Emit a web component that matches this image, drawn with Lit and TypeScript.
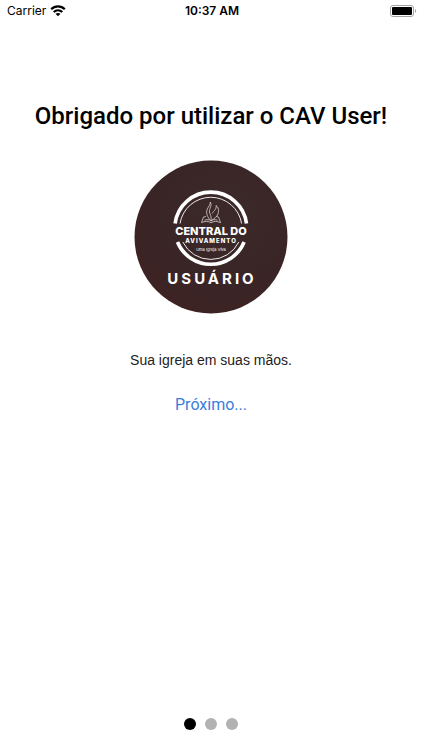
import { LitElement, html, css } from "lit";
import { customElement, state } from "lit/decorators.js";

@customElement("status-bar")
class StatusBar extends LitElement {
  static styles = css`
    :host {
      display: grid;
      grid-template-columns: 1fr auto 1fr;
      align-items: center;
      height: 22px;
      padding: 0 5px 0 7px;
      font-size: 12px;
      line-height: 22px;
    }
    .carrier {
      display: flex;
      align-items: center;
      gap: 4px;
    }
    .time {
      font-weight: 600;
    }
    .battery {
      justify-self: end;
    }
    svg {
      display: block;
    }
  `;

  render() {
    return html`
      <div class="carrier">
        <span>Carrier</span>
        <svg width="16" height="12" viewBox="0 0 16 12" aria-label="Wi-Fi">
          <g fill="none" stroke="#000" stroke-width="2.2">
            <path d="M1.2 4.3C5 .5 11 .5 14.8 4.3" />
            <path d="M3.7 7C6.2 4.7 9.8 4.7 12.3 7" />
          </g>
          <path d="M5.5 8.7C6.9 7.6 9.1 7.6 10.5 8.7L8 11.2z" />
        </svg>
      </div>
      <div class="time">10:37 AM</div>
      <svg class="battery" width="27" height="12" viewBox="0 0 27 12" aria-label="Battery">
        <rect x=".5" y=".5" width="23" height="11" rx="2.5" fill="#fff" stroke="#a3a3a3" />
        <rect x="2" y="2" width="20" height="8" rx="1" />
        <path d="M25 4c1.6.5 1.6 3.5 0 4z" fill="#a3a3a3" />
      </svg>
    `;
  }
}

@customElement("church-logo")
class ChurchLogo extends LitElement {
  static styles = css`
    :host {
      display: block;
      width: 154px;
    }
    svg {
      display: block;
      width: 100%;
    }
    text {
      fill: #fff;
      text-anchor: middle;
    }
    .name {
      font: 800 11px Inter, sans-serif;
    }
    .sub {
      font: 800 6px Inter, sans-serif;
      letter-spacing: 1px;
    }
    .motto {
      font: 400 4px Inter, sans-serif;
    }
    .product {
      font: 700 15px Inter, sans-serif;
      letter-spacing: 3px;
    }
  `;

  render() {
    return html`
      <svg viewBox="0 0 154 154" role="img" aria-label="Central do Avivamento Usuário">
        <defs>
          <radialGradient id="disc" cx=".6" cy=".35" r=".8">
            <stop offset="0" stop-color="#3b292a" />
            <stop offset=".6" stop-color="#3a2526" />
            <stop offset="1" stop-color="#402121" />
          </radialGradient>
        </defs>
        <circle cx="77" cy="77" r="76.5" fill="url(#disc)" />
        <g fill="none" stroke="#fff">
          <path stroke-width="3.6" d="M41.1 63.5A36 36 0 0 1 112.5 63.5" />
          <path stroke-width="3.6" d="M43.5 82A36 36 0 0 0 110.1 82" />
          <path stroke-width=".9" d="M46 63.5A31.2 31.2 0 0 1 107.6 63.5" />
          <path stroke-width=".9" d="M48.8 82A31.2 31.2 0 0 0 104.8 82" />
        </g>
        <g fill="none" stroke="#d9cfcf" stroke-width=".8" stroke-linejoin="round">
          <path d="M77 60.8C73.5 57.5 71.5 53 73.3 49C74.5 46.5 76.5 44.5 76.3 42C78.5 45.5 75 48.5 75.5 52C75.8 54.5 78 56.5 77 60.8C81 58.5 84.8 55 84.5 50.5C84.4 48.5 84 47 82 45.5C83 49.5 79.5 50.5 78.3 53.5" />
          <path d="M72 56.5L69.5 57L67.5 62.6C71 61 74.5 61 77 62.8C79.5 61 83 61 86.5 62.6L84.5 57L82 56.5" />
          <path d="M70.5 60.2C73 59.2 75.5 59.5 77 61C78.5 59.5 81 59.2 83.5 60.2" />
        </g>
        <text class="name" x="77" y="75">CENTRAL DO</text>
        <text class="sub" x="77" y="83">AVIVAMENTO</text>
        <text class="motto" x="77" y="91">Uma Igreja Viva</text>
        <text class="product" x="78" y="124">USUÁRIO</text>
      </svg>
    `;
  }
}

@customElement("app-root")
class AppRoot extends LitElement {
  @state() private page = 0;

  static styles = css`
    :host {
      display: flex;
      flex-direction: column;
      min-height: 100vh;
      background: #fff;
      color: #000;
      font-family: Inter, "Liberation Sans", sans-serif;
    }
    main {
      flex: 1;
      display: flex;
      flex-direction: column;
      align-items: center;
      padding-top: 78px;
    }
    h1 {
      margin: 0 0 28px;
      font: 500 24px/32px Roboto, sans-serif;
      text-align: center;
    }
    p {
      margin: 36px 0 25px;
      font: 14px/20px "Liberation Sans", sans-serif;
      color: #222;
    }
    button {
      padding: 0;
      border: 0;
      background: none;
      font: inherit;
      cursor: pointer;
    }
    .next {
      font: 16px/20px Roboto, sans-serif;
      color: #3b7ddd;
    }
    nav {
      display: flex;
      justify-content: center;
      gap: 9px;
      padding-bottom: 20px;
    }
    .dot {
      width: 12px;
      height: 12px;
      border-radius: 50%;
      background: #b2b2b2;
    }
    .dot[aria-current="true"] {
      background: #000;
    }
  `;

  private go(page: number) {
    this.page = page % 3;
  }

  render() {
    return html`
      <status-bar></status-bar>
      <main>
        <h1>Obrigado por utilizar o CAV User!</h1>
        <church-logo></church-logo>
        <p>Sua igreja em suas mãos.</p>
        <button class="next" @click=${() => this.go(this.page + 1)}>Próximo...</button>
      </main>
      <nav aria-label="Páginas">
        ${[0, 1, 2].map(
          (i) => html`<button
            class="dot"
            aria-label="Página ${i + 1}"
            aria-current=${i === this.page ? "true" : "false"}
            @click=${() => this.go(i)}
          ></button>`
        )}
      </nav>
    `;
  }
}
